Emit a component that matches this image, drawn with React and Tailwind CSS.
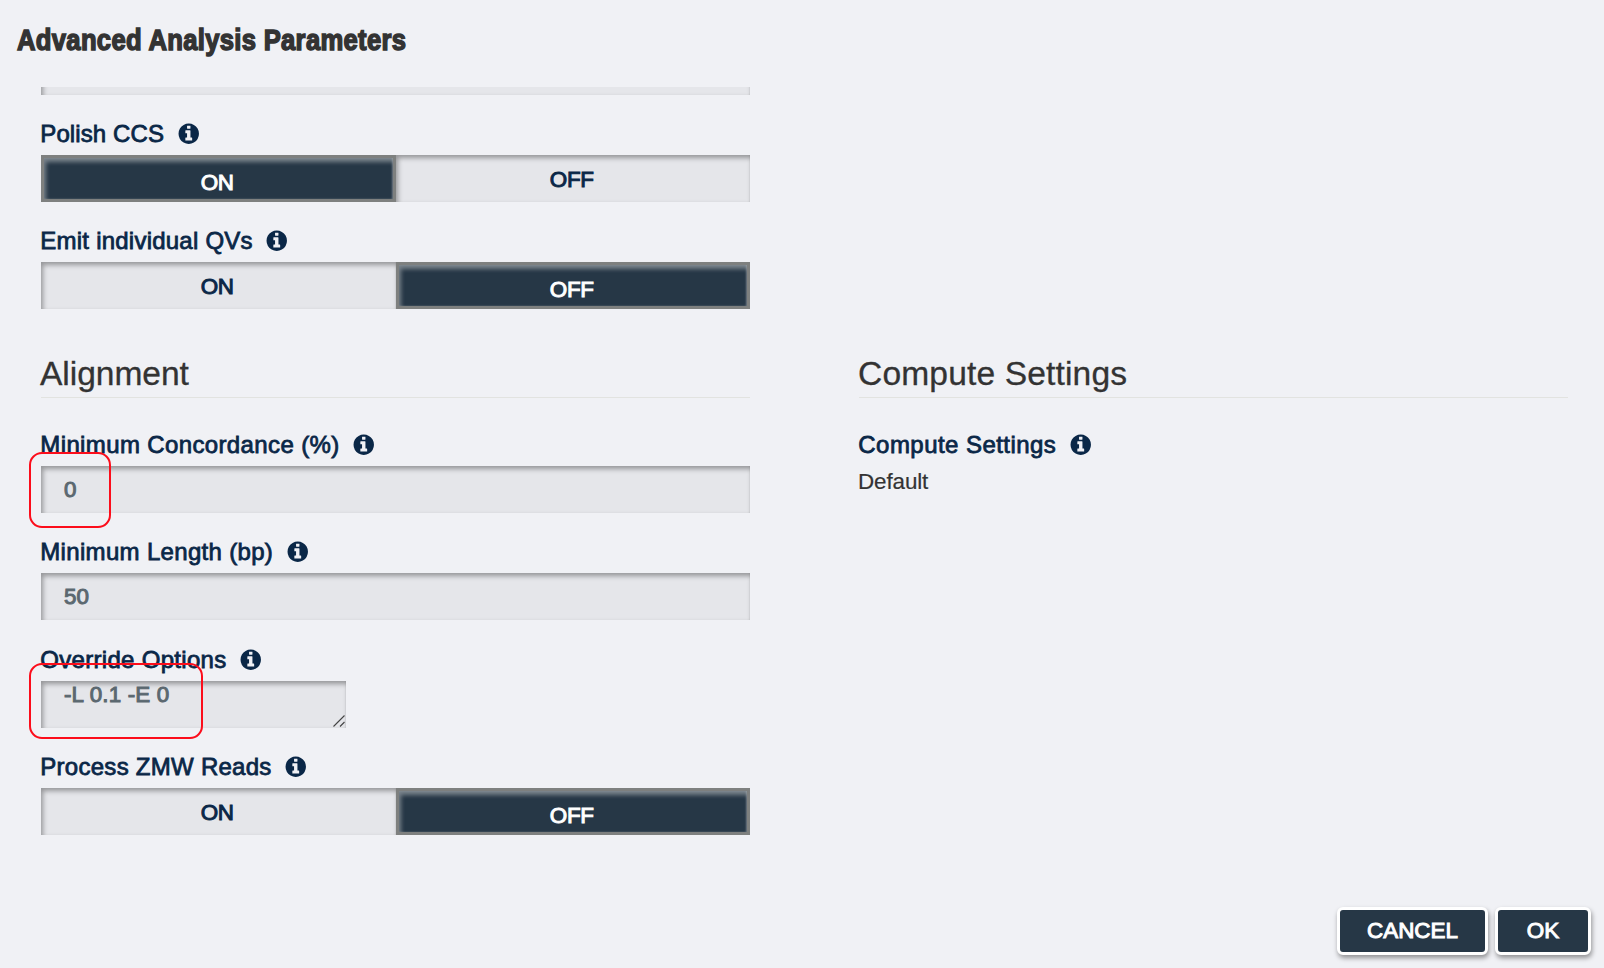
const INSET =
  "bg-[#e5e6ea] shadow-[inset_2px_3px_5px_rgba(0,0,0,0.35),inset_-1px_0_1px_rgba(0,0,0,0.03)]";
const MEDIUM = "[-webkit-text-stroke:0.8px_currentColor]";
const HEAVY = "[-webkit-text-stroke:1px_currentColor]";

function InfoIcon() {
  return (
    <svg className="ml-[13.5px] size-[21.5px] shrink-0" viewBox="88 88 1616 1616" fill="currentColor">
      <path d="M1152 1376v-160q0-14-9-23t-23-9h-96v-512q0-14-9-23t-23-9h-320q-14 0-23 9t-9 23v160q0 14 9 23t23 9h96v320h-96q-14 0-23 9t-9 23v160q0 14 9 23t23 9h448q14 0 23-9t9-23zm-128-896v-160q0-14-9-23t-23-9h-192q-14 0-23 9t-9 23v160q0 14 9 23t23 9h192q14 0 23-9t9-23zm640 416q0 209-103 385.5t-279.5 279.5-385.5 103-385.5-103-279.5-279.5-103-385.5 103-385.5 279.5-279.5 385.5-103 385.5 103 279.5 279.5 103 385.5z" />
    </svg>
  );
}

function Label({ children, tracking }) {
  return (
    <div className="-ml-[0.7px] flex h-[42px] items-center text-[#0a2747]">
      <span className={`text-[24px] leading-[42px] whitespace-pre ${tracking} ${MEDIUM}`}>{children}</span>
      <InfoIcon />
    </div>
  );
}

function Field({ label, tracking, children }) {
  return (
    <div className="h-[107.4px]">
      <Label tracking={tracking}>{label}</Label>
      {children}
    </div>
  );
}

function Segment({ active, children }) {
  const look = active
    ? "border-[3px] border-[#7e807f] bg-[#263746] pt-[10px] text-white shadow-[inset_2px_4px_4px_rgba(175,180,184,0.6),inset_-1px_0_2px_rgba(170,176,180,0.5)]"
    : `${INSET} pt-[4px] text-[#0a2747]`;
  return (
    <button type="button" className={`flex w-1/2 items-center justify-center pr-[2px] text-[22.4px] leading-none tracking-[-0.3px] ${HEAVY} ${look}`}>
      {children}
    </button>
  );
}

function Toggle({ value }) {
  return (
    <div className="flex h-[47px]">
      <Segment active={value === "ON"}>ON</Segment>
      <Segment active={value === "OFF"}>OFF</Segment>
    </div>
  );
}

function ValueBox({ children, highlight }) {
  return (
    <div className={`relative flex h-[47px] items-center pt-[2px] pl-[23px] text-[22.4px] leading-none text-[#5b6870] ${HEAVY} ${INSET}`}>
      {children}
      {highlight && (
        <span className="absolute -top-[14px] -left-[12px] h-[76px] w-[82px] rounded-[13px] border-2 border-[#fc0d1b]" />
      )}
    </div>
  );
}

function SectionTitle({ children, tracking }) {
  return (
    <h2 className={`h-[46px] border-b border-[#e2e3e0] text-[33.6px] leading-[44px] text-[#333] [-webkit-text-stroke:0.3px_currentColor] ${tracking}`}>
      <span className="-ml-px">{children}</span>
    </h2>
  );
}

function FooterButton({ width, children }) {
  return (
    <button type="button" className={`h-[48px] rounded-[6px] border-[3px] border-white bg-[#263746] text-[22.4px] leading-none text-white shadow-[1px_3px_5px_rgba(0,0,0,0.4)] ${width} ${HEAVY}`}>
      {children}
    </button>
  );
}

export default function App() {
  return (
    <div className="flex h-[968px] w-[1604px] flex-col overflow-hidden bg-[#f0f1f5] font-['Liberation_Sans',Arial,sans-serif]">
      <header className="h-[87px] shrink-0 pt-[19px] pl-[16.5px]">
        <h1 className="inline-block origin-left scale-x-[0.866] text-[29.6px] leading-[42px] font-bold tracking-[0.35px] whitespace-nowrap text-[#333] [-webkit-text-stroke:1.5px_currentColor]">
          Advanced Analysis Parameters
        </h1>
      </header>

      <main className="flex-1 pl-[41px]">
        <div className="w-[709px]">
          <div className="h-2 overflow-hidden">
            <div className={`-mt-[39px] h-[47px] ${INSET}`} />
          </div>
          <div className="pt-[17.8px]">
            <Field label="Polish CCS" tracking="tracking-[0.1px]"><Toggle value="ON" /></Field>
            <Field label="Emit individual QVs" tracking="tracking-[0.23px]"><Toggle value="OFF" /></Field>
          </div>
        </div>

        <div className="flex gap-[109px] pt-[24.2px]">
          <section className="w-[709px]">
            <SectionTitle tracking="tracking-[-0.05px]">Alignment</SectionTitle>
            <div className="pt-[26px]">
              <Field label="Minimum Concordance (%)" tracking="tracking-[0.37px]">
                <ValueBox highlight>0</ValueBox>
              </Field>
              <Field label="Minimum Length (bp)" tracking="tracking-[0.32px]">
                <ValueBox>50</ValueBox>
              </Field>
              <Field label="Override Options" tracking="tracking-[0.3px]">
                <div className={`relative h-[47.4px] w-[305px] pt-[2.4px] pl-[23px] text-[22.4px] leading-[24px] tracking-[0.15px] text-[#5b6870] ${HEAVY} ${INSET}`}>
                  -L 0.1 -E 0
                  <svg className="absolute right-[1px] bottom-[1px] size-3" viewBox="0 0 12 12" fill="none" stroke="#444" strokeWidth="1.1">
                    <path d="M0.5 11.5 11.5 0.5M7 11.5 11.5 7" />
                  </svg>
                  <span className="absolute -top-[17.5px] -left-[12px] h-[76px] w-[174px] rounded-[13px] border-2 border-[#fc0d1b]" />
                </div>
              </Field>
              <Field label="Process ZMW Reads" tracking="tracking-[0.27px]"><Toggle value="OFF" /></Field>
            </div>
          </section>

          <section className="w-[709px]">
            <SectionTitle tracking="tracking-[0.14px]">Compute Settings</SectionTitle>
            <div className="pt-[26px]">
              <Label tracking="tracking-[0.45px]">Compute Settings</Label>
              <p className="-ml-px text-[22.4px] leading-[32px] tracking-[-0.1px] text-[#333] [-webkit-text-stroke:0.2px_currentColor]">Default</p>
            </div>
          </section>
        </div>
      </main>

      <footer className="flex h-[61px] shrink-0 justify-end gap-[7px] pr-[13px]">
        <FooterButton width="w-[151px]">CANCEL</FooterButton>
        <FooterButton width="w-[96px]">OK</FooterButton>
      </footer>
    </div>
  );
}
